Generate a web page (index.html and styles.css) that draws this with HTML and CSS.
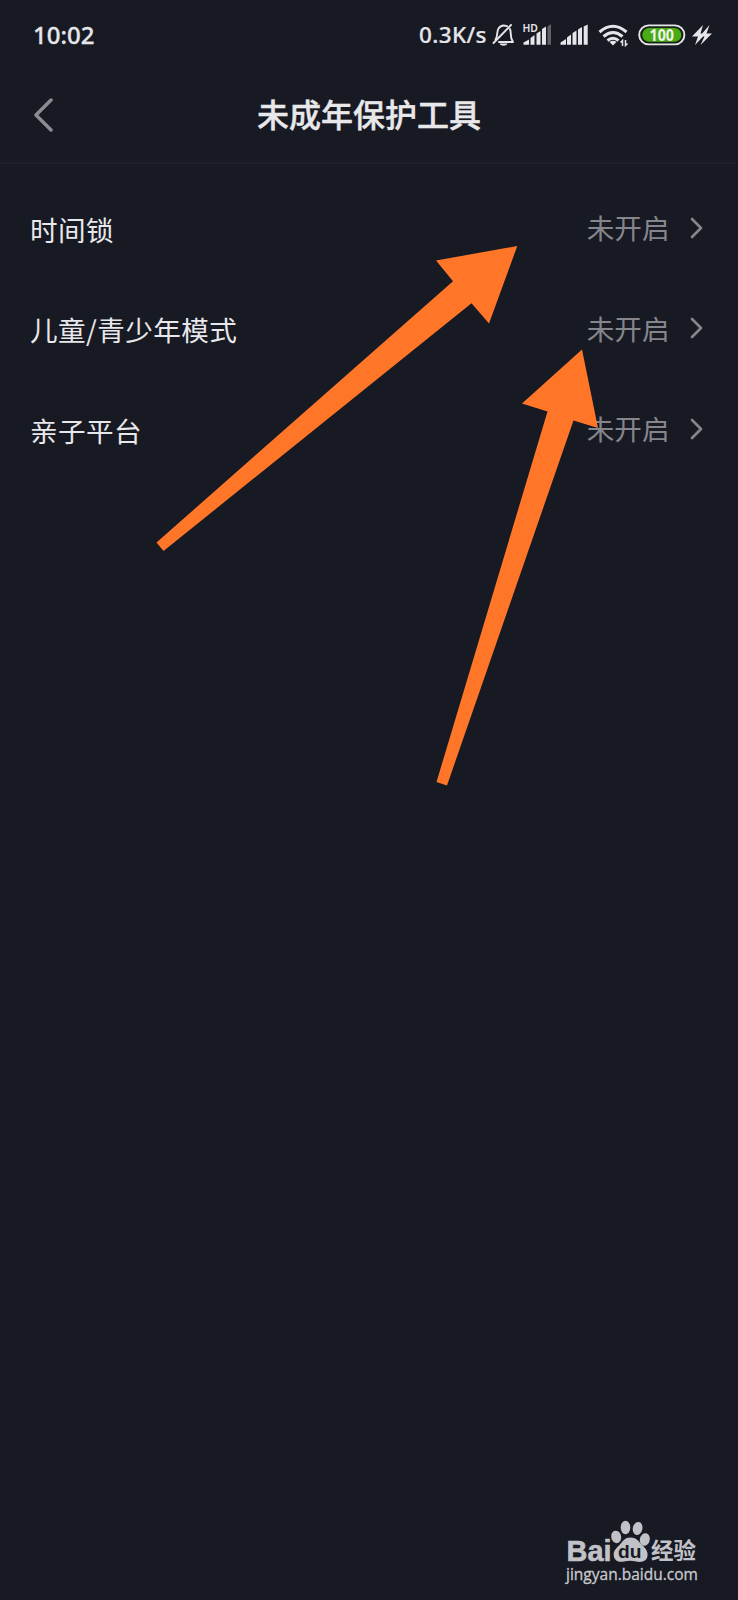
FILE: index.html
```html
<!DOCTYPE html>
<html lang="zh-CN">
<head>
<meta charset="utf-8">
<title>未成年保护工具</title>
<link rel="stylesheet" href="styles.css">
</head>
<body>
<div class="screen">
  <header class="status">
    <span class="clock">10:02</span>
    <span class="speed">0.3K/s</span>
    <svg class="status-icons" width="228" height="30" viewBox="490 20 228 30">
      <g fill="none" stroke="#e6e6ea" stroke-width="1.9" stroke-linejoin="round" stroke-linecap="round">
        <path d="M495.500 39.500C498 36.500 496.500 31.500 498.500 28.500C500.500 25.300 504 25 507 26.200M510 29C511.500 32 509.500 37 513 42H499"/>
        <path d="M493.500 43L511 25"/>
      </g>
      <path d="M499.500 43.500H507.500C506.500 46.500 500.500 46.500 499.500 43.500Z" fill="#e6e6ea"/>
      <text class="hd" x="522.500" y="31.500" textLength="15.500" lengthAdjust="spacingAndGlyphs">HD</text>
      <g fill="#e6e6ea">
        <path d="M523.500 44.700V42.500L529 39.500V44.700ZM530.500 44.700V38L534.500 35V44.700ZM536.500 44.700V33.500L540.500 31V44.700ZM542 44.700V29L546 26.500V44.700Z"/>
        <path opacity=".35" d="M547.500 44.700V26.500L551 24V44.700Z"/>
        <path d="M560.500 44.700V42.500L566 39V44.700ZM567 44.700V37.500L571 34.500V44.700ZM572.500 44.700V33L576.500 30.500V44.700ZM578 44.700V29.500L582 27V44.700ZM583.700 44.700V26.500L587.700 24.500V44.700Z"/>
      </g>
      <g fill="none" stroke="#e6e6ea" stroke-width="3">
        <path d="M599.500 32Q613 20.500 626.500 32"/>
        <path d="M603.500 36.500Q613 28.500 622.500 36.500"/>
        <path d="M607.500 40.500Q613 36 618.500 40.500"/>
      </g>
      <path d="M609.500 42Q613 39.500 616.500 42L613 45.500Z" fill="#e6e6ea"/>
      <path d="M622.500 46V40.500L620.500 42.500M625.500 40V45.500L627.500 43.500" fill="none" stroke="#e6e6ea" stroke-width="1.500"/>
      <rect x="639.200" y="25.400" width="45.200" height="19" rx="9.500" fill="#182417" stroke="#e6e6ea" stroke-width="1.900"/>
      <rect x="642.300" y="28" width="39" height="13.800" rx="6.900" fill="#4bab14"/>
      <text class="level" x="649.500" y="40.700" textLength="24.500" lengthAdjust="spacingAndGlyphs">100</text>
      <path d="M703 25L692 36.500H698L695 45L706 33.500H700.500ZM709.500 25L699.500 36.500H704.500L700.500 45L712 33.500H706.500Z" fill="#e6e6ea"/>
    </svg>
  </header>
  <nav class="titlebar">
    <svg class="back" width="20" height="36" viewBox="0 0 20 36"><path d="M17 2L2 17L17 32" fill="none" stroke="#8b8b92" stroke-width="3.500" stroke-linecap="round" stroke-linejoin="round"/></svg>
    <h1 class="title">未成年保护工具</h1>
  </nav>
  <main class="list">
    <div class="row"><span class="label">时间锁</span><span class="state">未开启</span><svg class="chevron" width="13" height="22" viewBox="0 0 13 22"><path d="M2 2L11 11L2 20" /></svg></div>
    <div class="row"><span class="label">儿童/青少年模式</span><span class="state">未开启</span><svg class="chevron" width="13" height="22" viewBox="0 0 13 22"><path d="M2 2L11 11L2 20" /></svg></div>
    <div class="row"><span class="label">亲子平台</span><span class="state">未开启</span><svg class="chevron" width="13" height="22" viewBox="0 0 13 22"><path d="M2 2L11 11L2 20" /></svg></div>
  </main>
  <svg class="arrows" width="738" height="1600" viewBox="0 0 738 1600">
    <path fill="#ff7628" d="M517.300 246L436 260.500L453 281.300L156.500 542.500L163.500 551L471.500 303.300L489 323.500Z"/>
    <path fill="#ff7628" d="M582 349.500L522 403.500L547.500 411.500L436.500 782L447 785.500L573.500 420.500L598 428Z"/>
  </svg>
  <footer class="brand">
    <svg width="134" height="44" viewBox="565 1518 134 44">
      <g fill="#c1c2c7">
        <text class="bai" x="566.500" y="1561" textLength="45" lengthAdjust="spacingAndGlyphs">Bai</text>
        <ellipse cx="616.200" cy="1537" rx="5" ry="6.300" transform="rotate(-12 616 1537)"/>
        <ellipse cx="625.500" cy="1527.500" rx="4.800" ry="6.800"/>
        <ellipse cx="637.700" cy="1528.500" rx="4.800" ry="6.600" transform="rotate(12 638 1528)"/>
        <ellipse cx="644.900" cy="1539.500" rx="5" ry="6.300" transform="rotate(12 645 1539)"/>
        <path d="M630.500 1537.500C636 1537.500 638.500 1541 642 1545C646 1548.500 648.500 1552 647.300 1557C646 1562 640 1562.500 636 1561.500C632 1560.500 628 1560.500 624 1561.500C619 1562.500 614.500 1561 613.800 1556C613 1551 616 1548.500 619.500 1545C623 1541 625 1537.500 630.500 1537.500Z"/>
        <text class="jingyan" x="651" y="1559" textLength="45" lengthAdjust="spacingAndGlyphs">经验</text>
      </g>
      <text class="du" x="618" y="1558" textLength="23.500" lengthAdjust="spacingAndGlyphs">du</text>
    </svg>
    <span class="site">jingyan.baidu.com</span>
  </footer>
</div>
</body>
</html>
```

FILE: styles.css
```css
* { box-sizing: border-box; }
body { margin: 0; background: #171923; font-family: "Noto Sans", "Noto Sans CJK SC", sans-serif; }
.screen { position: relative; width: 738px; height: 1600px; display: flex; flex-direction: column; overflow: hidden; background: #171923; }
.status { height: 70px; padding: 0 20px 0 33px; display: flex; align-items: center; color: #e6e6ea; font-weight: 500; line-height: 30px; }
.clock { flex: 1; font-size: 24px; -webkit-text-stroke: .3px #e6e6ea; }
.speed { width: 71px; font-size: 22.5px; letter-spacing: .35px; white-space: nowrap; -webkit-text-stroke: .2px #e6e6ea; }
.status-icons { flex: none; display: block; }
.hd { font: 600 10px "Noto Sans", sans-serif; fill: #e6e6ea; }
.level { font: 700 15.5px "Noto Sans", sans-serif; fill: #f0f5eb; }
.titlebar { height: 94px; padding: 0 34px; display: grid; grid-template-columns: 20px 1fr 20px; align-items: center; border-bottom: 2px solid #1e2029; }
.back { display: block; }
.title { margin: 0; padding-bottom: 6px; text-align: center; font: 500 32px/44px "Noto Sans CJK SC", sans-serif; color: #e8e8eb; -webkit-text-stroke: .4px #e8e8eb; }
.list { padding-top: 14px; flex: 1; }
.row { height: 100.5px; padding: 0 35px 0 30px; display: flex; align-items: center; font: 400 27.6px/40px "Noto Sans CJK SC", sans-serif; }
.label { flex: 1; color: #e8e8eb; padding-top: 1px; letter-spacing: .4px; }
.state { color: #85868c; margin-right: 20.5px; padding-bottom: 2px; }
.chevron { fill: none; stroke: #85868c; stroke-width: 2.7; stroke-linecap: round; stroke-linejoin: round; margin-bottom: 1px; }
.arrows { position: absolute; inset: 0; }
.brand { height: 82px; padding-left: 565px; display: flex; flex-direction: column; }
.brand svg { display: block; flex: none; overflow: visible; }
.bai { font: 700 30px "Liberation Sans", sans-serif; stroke: #c1c2c7; stroke-width: .6px; }
.du { font: 700 19px "Liberation Sans", sans-serif; fill: #171923; }
.jingyan { font: 700 23px "Noto Sans CJK SC", sans-serif; }
.site { padding: 2px 0 0 1px; font: 400 15.5px/20px "Open Sans", sans-serif; color: #c9cace; -webkit-text-stroke: .3px #c9cace; }
```
